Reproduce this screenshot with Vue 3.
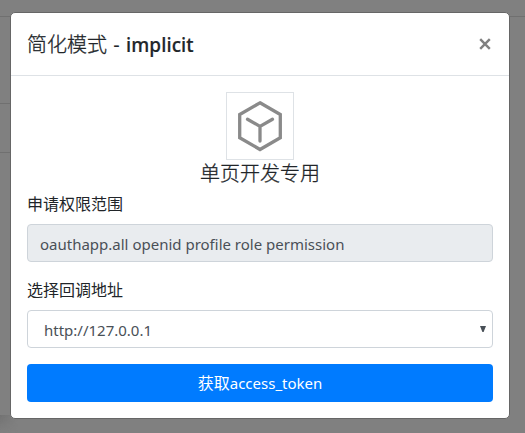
<script setup>
import { ref } from 'vue'

const scope = ref('oauthapp.all openid profile role permission')
const callbacks = ['http://127.0.0.1']
const callback = ref(callbacks[0])
</script>

<template>
  <div class="backdrop">
    <div class="page-lines" aria-hidden="true">
      <i class="line top"></i>
      <i class="line second"></i>
      <i class="line third"></i>
      <i class="footer-shade"></i>
    </div>
    <section class="modal" role="dialog">
      <header class="modal-header">
        <h5 class="title"><span class="title-cn">简化模式</span><span class="title-dash">-</span><span class="title-en">implicit</span></h5>
        <button class="close" type="button" aria-label="Close">
          <svg width="12" height="12" viewBox="0 0 12 12"><path d="M1.2 1.1 10.8 10.9M10.8 1.1 1.2 10.9" /></svg>
        </button>
      </header>
      <div class="modal-body">
        <div class="app">
          <div class="logo">
            <svg width="66" height="66" viewBox="0 0 66 66">
              <path d="M33 9.8 53.3 21.5V44.7L33 56.5 12.7 44.7V21.5Z" />
              <path d="M20.5 26.2 33 33.4 45.5 26.2M33 33.4V48" stroke-linecap="round" />
            </svg>
          </div>
          <h5 class="app-name">单页开发专用</h5>
        </div>
        <label class="label">申请权限范围</label>
        <div class="control readonly"><span class="scope">{{ scope }}</span></div>
        <label class="label second-label">选择回调地址</label>
        <div class="control select">
          <span class="url">{{ callback }}</span>
          <svg class="caret" width="6" height="6" viewBox="0 0 6 6"><path d="M0 0H6L3.6 6H2.4Z" /></svg>
        </div>
        <button class="submit" type="button"><span>获取</span><span class="token">access_token</span></button>
      </div>
    </section>
  </div>
</template>

<style>
body {
  margin: 0;
  overflow: hidden;
}
</style>

<style scoped>
.backdrop,
.backdrop * {
  box-sizing: border-box;
}
.backdrop {
  position: relative;
  width: 525px;
  height: 433px;
  padding: 12px 15px 14px 10px;
  background: #808080;
  color: #212529;
  font-family: "Noto Sans", "Noto Sans CJK SC", sans-serif;
  font-size: 16px;
  line-height: 24px;
}
.line {
  position: absolute;
  left: 0;
  height: 1px;
  background: #707070;
}
.top {
  top: 16px;
  width: 525px;
}
.second {
  top: 103px;
  width: 10px;
}
.third {
  top: 152px;
  width: 10px;
}
.footer-shade {
  position: absolute;
  left: 0;
  top: 415px;
  width: 18px;
  height: 18px;
  background: linear-gradient(#727272, rgba(128, 128, 128, 0));
  mask-image: linear-gradient(90deg, #000, transparent);
}
.modal {
  position: relative;
  width: 500px;
  height: 407px;
  border: 1px solid #666;
  border-radius: 5px;
  background: #fff;
}
.modal-header {
  display: flex;
  align-items: flex-start;
  justify-content: space-between;
  height: 63px;
  padding: 16px;
  border-bottom: 1px solid #dee2e6;
}
.title {
  display: flex;
  align-items: baseline;
  margin: 0;
  font-size: 20px;
  font-weight: 400;
  line-height: 30px;
}
.title-cn,
.app-name {
  font-family: "Noto Sans CJK SC", sans-serif;
  font-weight: 300;
  -webkit-text-stroke: 0.3px #212529;
}
.title-dash {
  width: 19px;
  text-align: center;
}
.title-en {
  font-size: 19px;
  font-weight: 500;
  letter-spacing: 0.1px;
  -webkit-text-stroke: 0.2px #212529;
}
.close {
  display: flex;
  margin: 9px 2px 0 0;
  padding: 0;
  border: 0;
  background: none;
}
.close path {
  stroke: #808080;
  stroke-width: 2.4;
}
.modal-body {
  padding: 16px;
}
.app {
  display: flex;
  flex-direction: column;
  align-items: center;
}
.logo {
  width: 68px;
  height: 68px;
  border: 1px solid #dee2e6;
}
.logo svg {
  display: block;
}
.logo path {
  fill: none;
  stroke: #8a8a8a;
  stroke-width: 3.3;
}
.app-name {
  margin: 1px 0 7px;
  font-size: 20px;
  line-height: 24px;
}
.label {
  display: block;
  margin-bottom: 8px;
}
.control {
  display: flex;
  align-items: center;
  height: 38px;
  padding: 2px 12px 0;
  border: 1px solid #ced4da;
  border-radius: 4px;
  background: #fff;
  color: #495057;
  font-size: 15px;
  white-space: nowrap;
}
.readonly {
  background: #e9ecef;
}
.second-label {
  margin-top: 16px;
}
.select {
  justify-content: space-between;
  padding: 2px 6px 0 16px;
}
.caret {
  margin-top: -3px;
  fill: #495057;
}
.submit {
  display: flex;
  align-items: baseline;
  justify-content: center;
  width: 100%;
  height: 38px;
  margin-top: 16px;
  padding: 7px 0;
  border: 0;
  border-radius: 4px;
  background: #007bff;
  color: #fff;
  font: inherit;
}
.token {
  font-size: 15px;
}
</style>
